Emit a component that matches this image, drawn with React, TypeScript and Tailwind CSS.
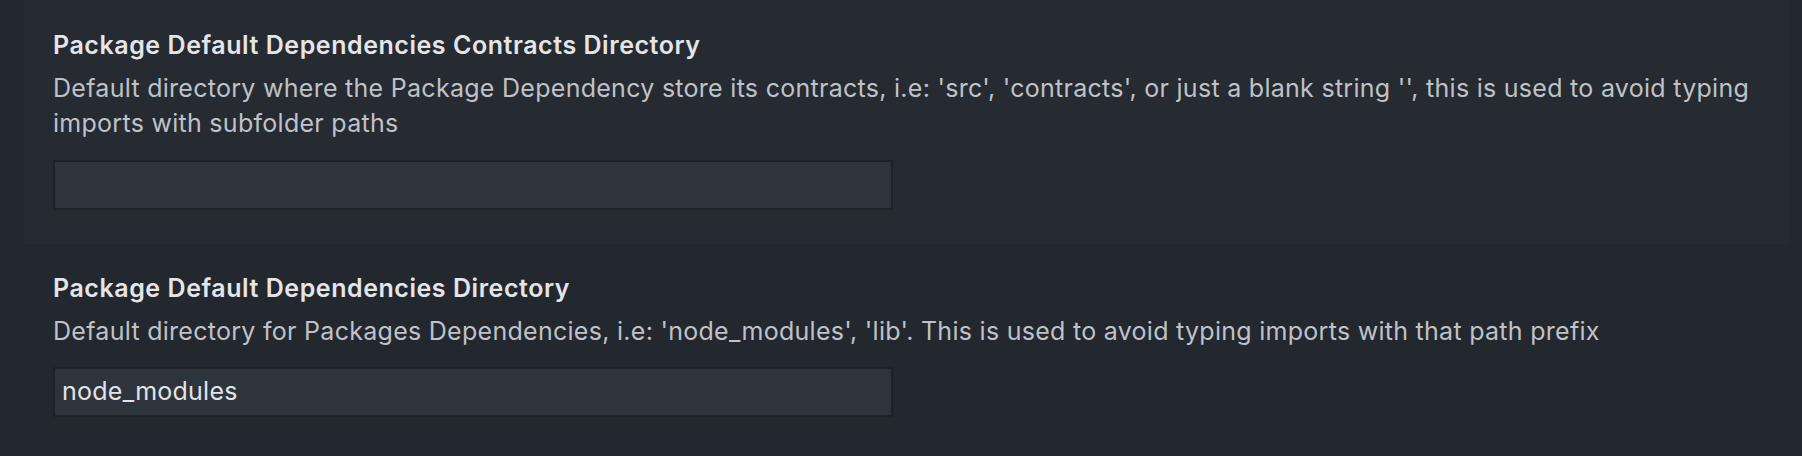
import React from "react";

const font = { fontFamily: "Inter, 'Noto Sans', sans-serif" };

export default function App() {
  return (
    <div className="w-full h-[456px] bg-[#23272e] overflow-hidden" style={font}>
      <div className="ml-[24px] mr-[13px] bg-[#262a31] pl-[29px] pr-[20px] pt-[29px] pb-[34px]">
        <div className="text-[25px] leading-[32px] font-semibold tracking-[0.55px] text-[#e4e5e8]">
          Package Default Dependencies Contracts Directory
        </div>
        <div className="mt-[10px] text-[25px] leading-[35px] tracking-[0.28px] text-[#bfc2c8]">
          Default directory where the Package Dependency store its contracts, i.e: 'src', 'contracts', or just a blank string '', this is used to avoid typing imports with subfolder paths
        </div>
        <div className="mt-[19px] w-[840px] h-[50px] border-2 border-[#1e2126] bg-[#2e343c]" />
      </div>
      <div className="ml-[24px] mr-[13px] pl-[29px] pt-[28px]">
        <div className="text-[25px] leading-[32px] font-semibold tracking-[0.55px] text-[#e4e5e8]">
          Package Default Dependencies Directory
        </div>
        <div className="mt-[10px] text-[25px] leading-[35px] tracking-[0.28px] text-[#bfc2c8]">
          Default directory for Packages Dependencies, i.e: 'node_modules', 'lib'. This is used to avoid typing imports with that path prefix
        </div>
        <div className="mt-[18px] w-[840px] h-[50px] border-2 border-[#1e2126] bg-[#2e343c] flex items-center px-[7px] text-[25px] tracking-[0.25px] text-[#e2e4e8]">
          node_modules
        </div>
      </div>
    </div>
  );
}
